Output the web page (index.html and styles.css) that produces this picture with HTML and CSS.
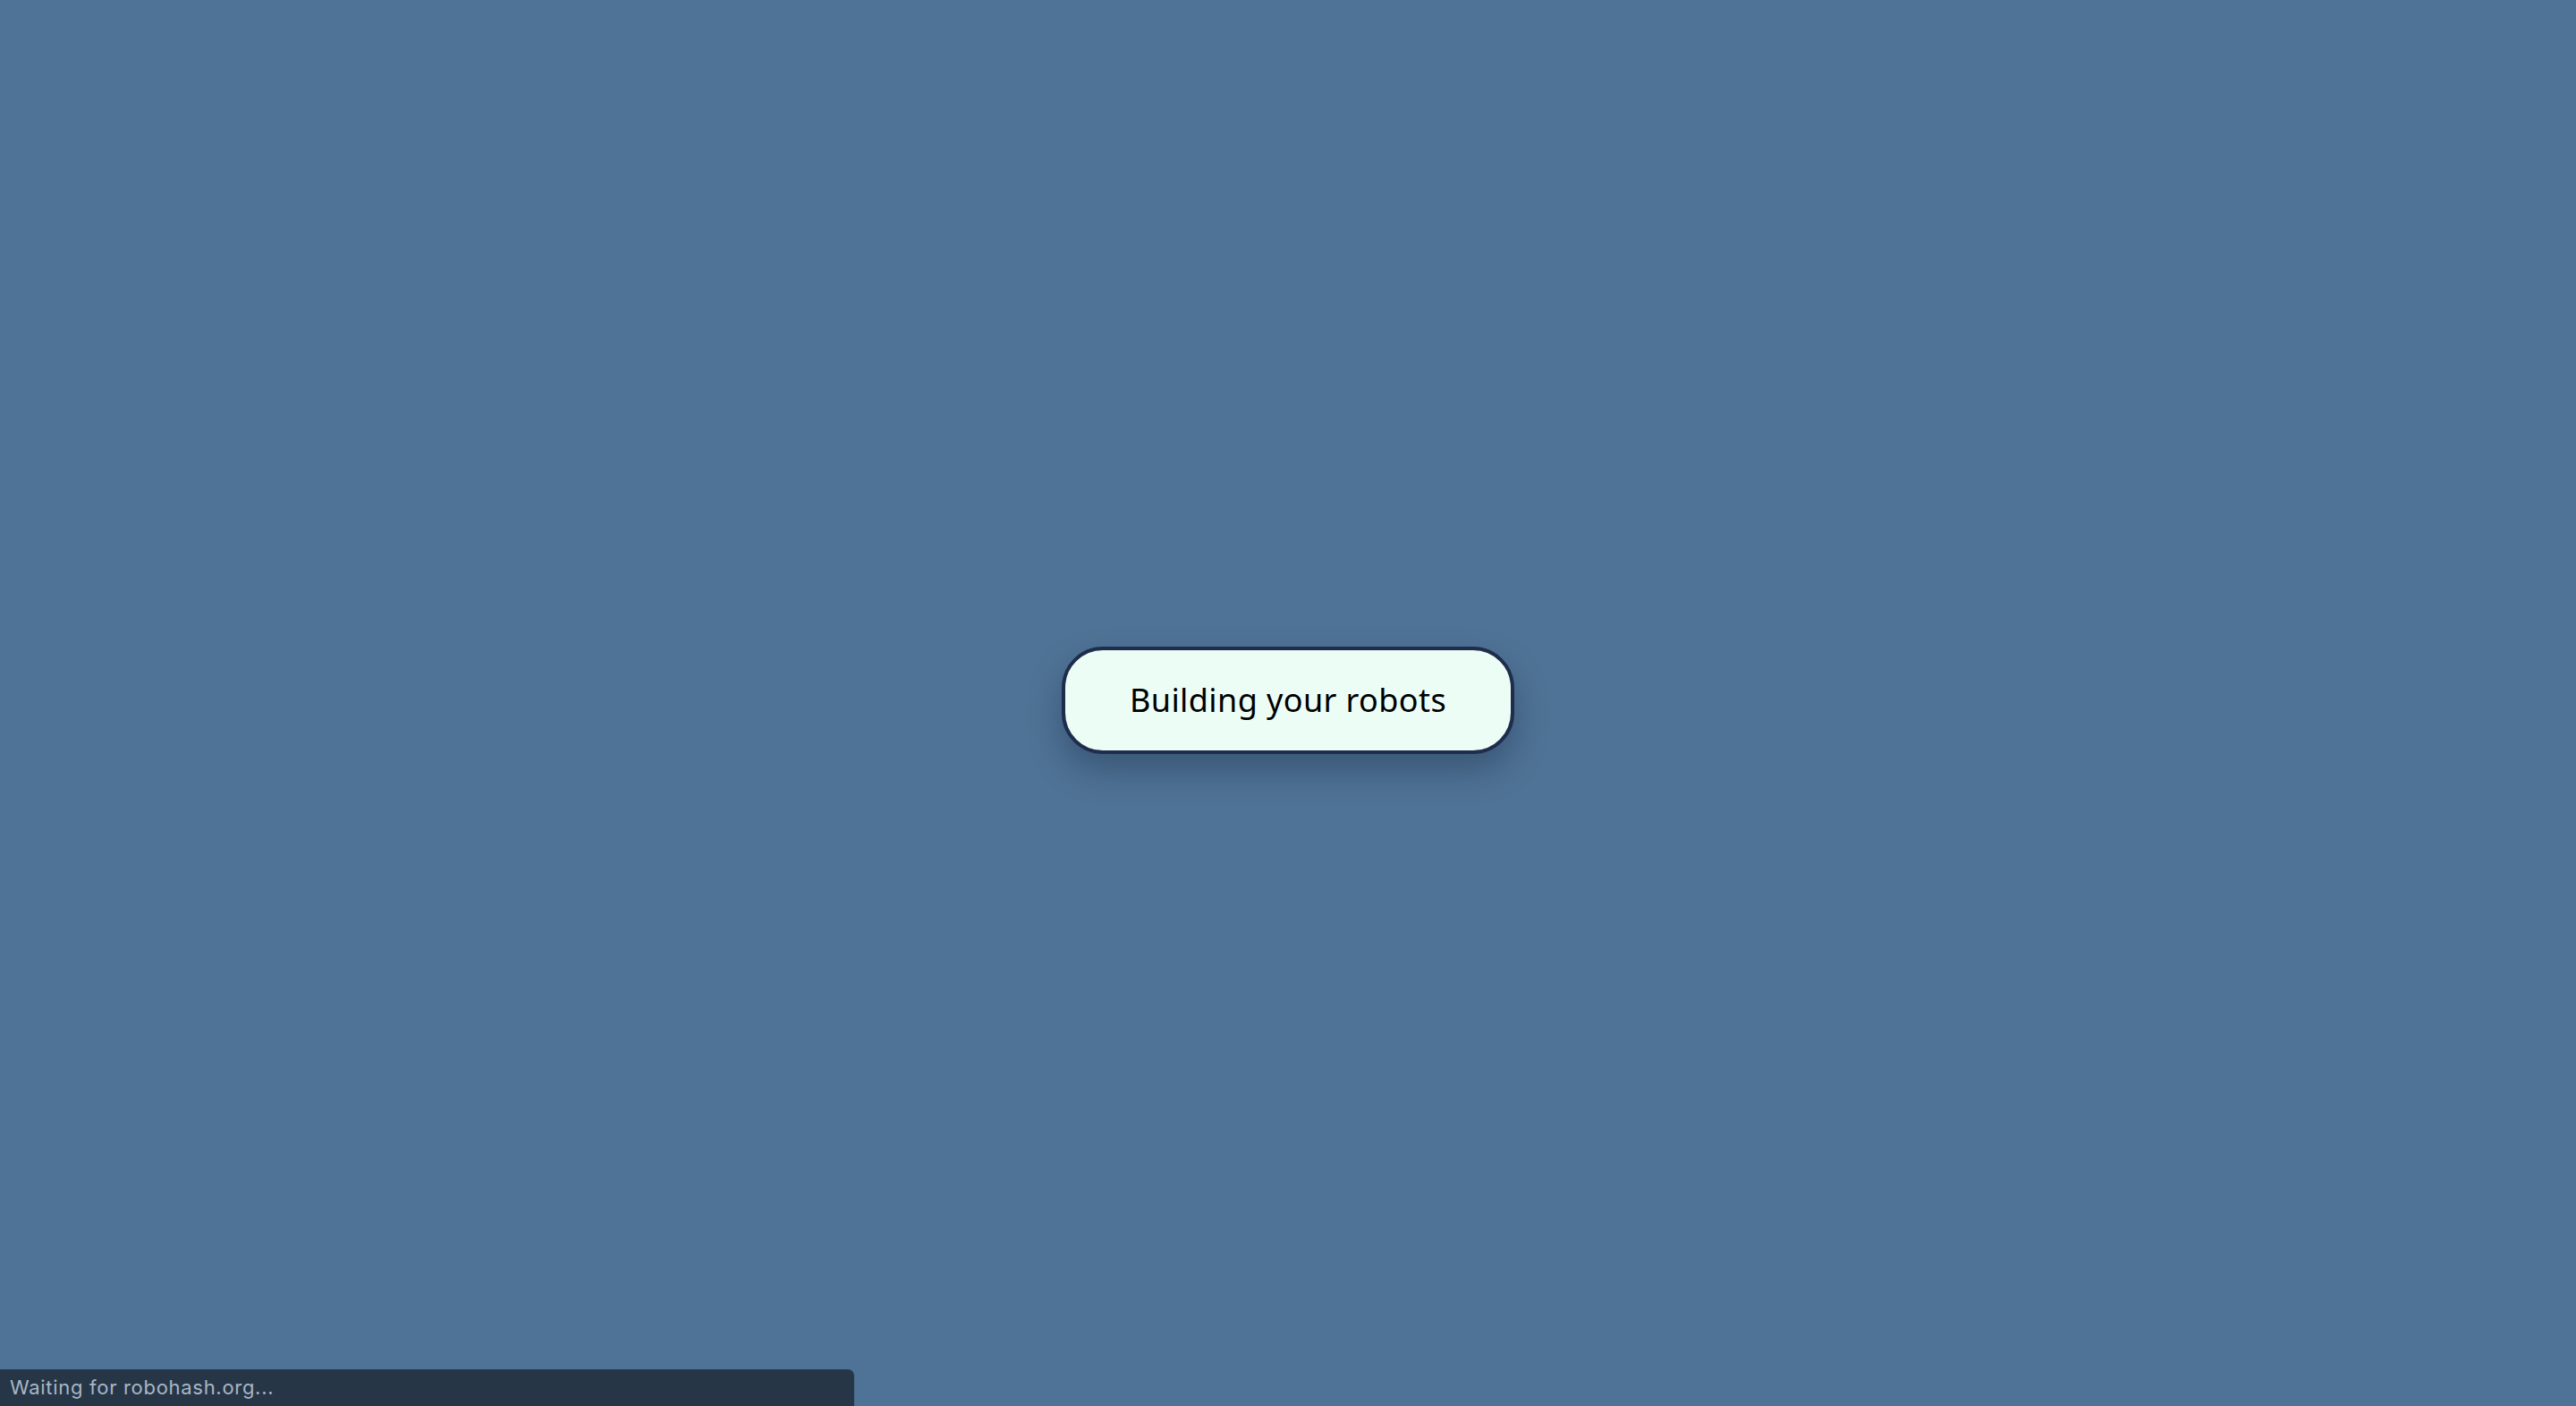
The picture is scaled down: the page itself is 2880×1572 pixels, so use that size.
FILE: index.html
```html
<!DOCTYPE html>
<html lang="en">
<head>
<meta charset="utf-8">
<title>Robots</title>
<link rel="stylesheet" href="styles.css">
</head>
<body>
<main class="stage">
  <div class="loading">Building your robots</div>
</main>
<div class="status">Waiting for robohash.org...</div>
</body>
</html>
```
FILE: styles.css
```css
html, body {
  margin: 0;
  padding: 0;
  height: 100%;
}
body {
  background: #4f7396;
  font-family: "Noto Sans", "Open Sans", sans-serif;
  overflow: hidden;
}
.stage {
  height: 100%;
  display: flex;
  align-items: center;
  justify-content: center;
}
.loading {
  margin-top: -6px;
  background: #ecfdf6;
  border: 4px solid #1f2d4c;
  border-radius: 46px;
  padding: 29px 72px;
  font-size: 36px;
  line-height: 54px;
  letter-spacing: 0.4px;
  color: #000;
  box-shadow: 0 18px 36px rgba(20, 35, 60, 0.35);
}
.status {
  position: fixed;
  left: 0;
  bottom: 0;
  width: 944px;
  height: 41px;
  padding-left: 11px;
  background: #263647;
  border-top-right-radius: 7px;
  color: #a9b6c5;
  font-family: "Inter", "Liberation Sans", sans-serif;
  font-size: 22px;
  letter-spacing: 0.7px;
  line-height: 41px;
}
```
